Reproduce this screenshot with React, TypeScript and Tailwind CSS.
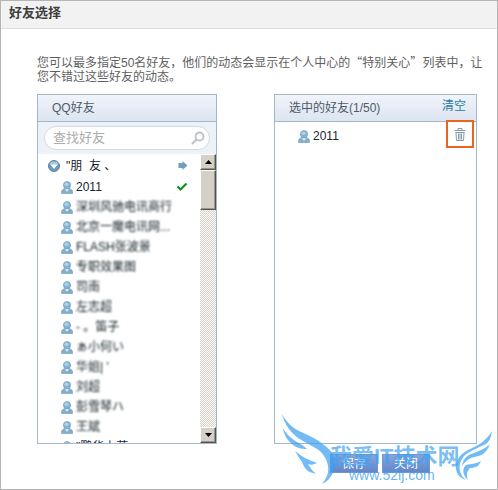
import React from "react";

interface Friend {
  name: string;
  blurred?: boolean;
  selected?: boolean;
}

const friends: Friend[] = [
  { name: "2011", selected: true },
  { name: "深圳风驰电讯商行", blurred: true },
  { name: "北京一魔电讯网...", blurred: true },
  { name: "FLASH张波景", blurred: true },
  { name: "专职效果图", blurred: true },
  { name: "司南", blurred: true },
  { name: "左志超", blurred: true },
  { name: "- 。笛子", blurred: true },
  { name: "ぁ小何い", blurred: true },
  { name: "华姐| '", blurred: true },
  { name: "刘超", blurred: true },
  { name: "彭雪琴ハ", blurred: true },
  { name: "王斌", blurred: true },
  { name: "\"鹏华上蓝" },
];

const PersonIcon = () => (
  <svg width="12" height="13" viewBox="0 0 12 13" className="shrink-0">
    <path
      d="M.5 12.500V11C.5 9 2 8 4 7.500H8C10 8 11.500 9 11.500 11V12.500Z"
      fill="#83afca"
      stroke="#6a9aba"
      strokeWidth=".6"
    />
    <path d="M4 7.800 6 11 8 7.800Z" fill="#e6f1f7" />
    <ellipse cx="6" cy="4.200" rx="3.600" ry="3.700" fill="#86b2cc" stroke="#6a9aba" strokeWidth=".6" />
    <ellipse cx="5.500" cy="3.200" rx="2.200" ry="1.700" fill="#b0cfe0" />
  </svg>
);

const TrashIcon = () => (
  <svg width="12" height="13" viewBox="0 0 12 13" fill="none" stroke="#8499a9">
    <path d="M4 2V.5h4V2M.5 2.500h11" />
    <path d="M1.500 4.500h9M2 4.500 2.500 12.500h7L10 4.500M4.500 5.500v6M6 5.500v6M7.500 5.500v6" />
  </svg>
);

const FriendRow = ({ friend }: { friend: Friend }) => (
  <li className="flex h-5 items-center gap-[3px] pl-[23px] pr-3">
    <PersonIcon />
    <span
      className={
        friend.blurred
          ? "whitespace-nowrap text-[#0e1c22] blur-[1px]"
          : "whitespace-nowrap text-[#182433]"
      }
    >
      {friend.name}
    </span>
    {friend.selected && (
      <svg width="12" height="10" viewBox="0 0 12 10" className="ml-auto">
        <path d="M1.500 4.500 4.500 7.500 10.500 1.500" fill="none" stroke="#12911f" strokeWidth="2.200" />
      </svg>
    )}
  </li>
);

const ScrollButton = ({ up }: { up?: boolean }) => (
  <button
    type="button"
    aria-label={up ? "向上滚动" : "向下滚动"}
    className="flex h-4 w-4 shrink-0 items-center justify-center border border-t-white border-l-white border-r-[#56534c] border-b-[#56534c] bg-[#d4d0c8] shadow-[inset_-1px_-1px_0_#98958d]"
  >
    <svg width="7" height="4" viewBox="0 0 7 4">
      <path d={up ? "M3.500 0 7 4H0Z" : "M0 0h7L3.500 4Z"} fill="#000" />
    </svg>
  </button>
);

const ScrollBar = () => (
  <div className="flex w-4 shrink-0 flex-col bg-[repeating-conic-gradient(#d4d0c8_0_25%,#ffffff_0_50%)] bg-[length:2px_2px]">
    <ScrollButton up />
    <div className="h-10 border border-t-white border-l-white border-r-[#56534c] border-b-[#56534c] bg-[#d4d0c8] shadow-[inset_-1px_-1px_0_#98958d]" />
    <div className="flex-1" />
    <ScrollButton />
  </div>
);

const PanelHeader = ({ children }: { children: React.ReactNode }) => (
  <div className="flex h-[27px] items-center justify-between border-b border-[#a3b8c8] bg-linear-to-b from-[#f0f3fa] to-[#dde5f1] pl-3.5 pr-2.5 text-[#4f5b68]">
    {children}
  </div>
);

const Watermark = () => (
  <div className="pointer-events-none absolute right-1 bottom-1 h-[74px] w-[214px]">
    <svg viewBox="0 0 214 74" className="absolute inset-0 h-full w-full" fill="#3da2f2" opacity=".72">
      <path d="M3 3C8 12 14 17 20 20 29 24 38 28 45 34 53 40 57 46 56 53 55 63 50 70 43 73 48 67 50 61 49 55 48 48 44 42 38 38 32 34 25 31 19 27 11 21 5 12 3 3Z" />
      <path d="M4 17C8 24 13 28 18 31 22 33 25 35 28 38 22 38 17 37 13 33 8 29 5 24 4 17Z" />
      <path d="M16 40C23 46 30 49 38 52 34 54 32 54 29 53 31 57 34 60 37 63 27 61 25 56 23 51 20 47 18 43 16 40Z" />
      <path d="M213 20C212 27 210 32 205 34 198 37 191 40 186 44 181 49 180 55 181 60 182 64 184 67 187 69 180 67 176 61 177 54 178 47 183 42 189 39 200 34 207 30 213 20Z" />
      <path d="M211 33C209 38 206 43 200 45 196 46 193 46 190 48 187 50 185 52 183 55 184 49 187 45 192 43 200 40 206 38 211 33Z" />
      <path d="M202 50C200 55 197 57 191 57 188 60 187 64 189 69 184 65 183 59 186 55 189 52 196 54 202 50Z" />
    </svg>
    <span className="absolute top-[34px] left-[51px] text-[22px] leading-6 font-bold whitespace-nowrap text-[#3da2f2]/70">
      我爱IT技术网
    </span>
    <span className="absolute top-14 left-[70px] text-[14px] leading-4 whitespace-nowrap text-[#3da2f2]/80">
      www.52ij.com
    </span>
  </div>
);

const App = () => {
  return (
    <div className="relative min-h-screen border border-[#b5b5b5] bg-white font-['Liberation_Sans','Noto_Sans_CJK_SC',sans-serif] text-[12px] leading-[14px]">
      <header className="flex h-7 items-center border-b border-[#dedede] bg-[#f2f2f2] px-2 pb-1">
        <h1 className="text-[13px] font-bold text-[#3d3d3d]">好友选择</h1>
      </header>

      <main className="pt-[26px] pl-9">
        <p className="pr-3 text-[#606060]">
          您可以最多指定50名好友，他们的动态会显示在个人中心的
          <span className="font-['Noto_Sans_CJK_SC',sans-serif]">“特别关心”</span>
          列表中，让您不错过这些好友的动态。
        </p>

        <div className="mt-2.5 flex h-[350px] justify-between gap-14 pr-5">
          <section className="flex w-[180px] flex-col border border-[#a3b8c8]">
            <PanelHeader>
              <h2>QQ好友</h2>
            </PanelHeader>
            <div className="bg-[#edf1f8] px-1.5 py-1">
              <div className="flex h-6 items-center rounded-full border border-[#d4dae3] bg-white pl-2 pr-1">
                <input
                  type="text"
                  aria-label="查找好友"
                  placeholder="查找好友"
                  className="w-0 flex-1 text-[13px] outline-none placeholder:text-[#adadad]"
                />
                <svg width="14" height="14" viewBox="0 0 14 14" fill="none" stroke="#bfc1c5">
                  <circle cx="8.500" cy="5.500" r="4" strokeWidth="1.800" />
                  <path d="M5.500 8.500 1 13" strokeWidth="2.200" />
                </svg>
              </div>
            </div>
            <div className="flex min-h-0 flex-1">
              <div className="min-w-0 flex-1 overflow-hidden">
                <div className="flex h-[23px] items-center pl-2.5 pr-3 text-[#17202a]">
                  <svg width="12" height="12" viewBox="0 0 12 12" className="mr-1.5">
                    <circle cx="6" cy="6" r="5.500" fill="#6d9ab8" stroke="#5588aa" />
                    <ellipse cx="6" cy="3.500" rx="4" ry="2" fill="#a9c8da" />
                    <path d="M2.300 4.500h7.400L6 9Z" fill="#fff" />
                  </svg>
                  <span className="whitespace-pre">"朋  友 、</span>
                  <svg width="10" height="9" viewBox="0 0 10 9" className="ml-auto">
                    <path d="M.5 2h4V0L9.500 4.500 4.500 9V7H.5Z" fill="#729fbc" />
                  </svg>
                </div>
                <ul>
                  {friends.map((friend) => (
                    <FriendRow key={friend.name} friend={friend} />
                  ))}
                </ul>
              </div>
              <ScrollBar />
            </div>
          </section>

          <section className="w-[203px] border border-[#a3b8c8]">
            <PanelHeader>
              <h2>选中的好友(1/50)</h2>
              <a href="#clear" className="pb-1 text-[#277f9f]">
                清空
              </a>
            </PanelHeader>
            <div className="relative flex h-7 items-center gap-[3px] pl-[23px] text-[#182433]">
              <PersonIcon />
              <span>2011</span>
              <button
                type="button"
                aria-label="删除"
                className="absolute -top-0.5 right-0.5 flex h-7 w-7 items-center justify-center border-2 border-[#e8641f]"
              >
                <TrashIcon />
              </button>
            </div>
          </section>
        </div>

        <div className="mt-2.5 flex justify-end gap-1 pr-[67px]">
          {["保存", "关闭"].map((label) => (
            <button
              key={label}
              type="button"
              className="h-[19px] w-12 border border-[#7795c5] bg-linear-to-b from-[#86a5dc] to-[#6386c8] text-white"
            >
              {label}
            </button>
          ))}
        </div>
      </main>

      <Watermark />
    </div>
  );
};

export default App;
